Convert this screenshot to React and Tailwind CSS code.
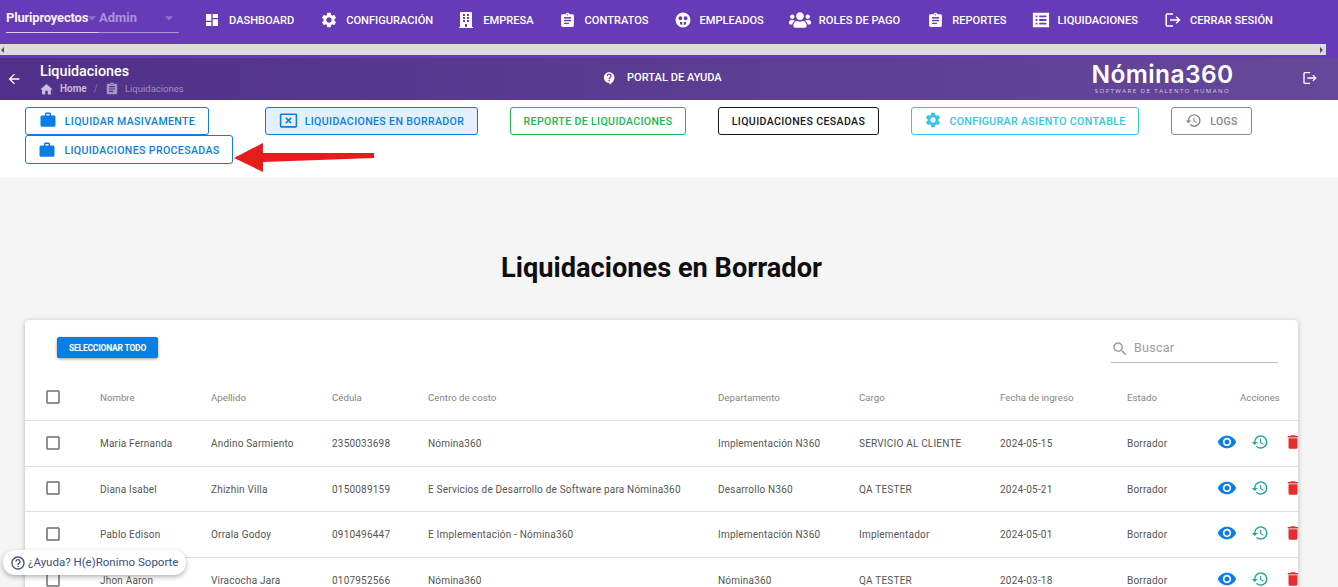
import React from "react";
import {
  MdDashboard, MdSettings, MdAssignment, MdLogout, MdArrowBack, MdHome,
  MdContactSupport, MdWork, MdOutlineCancelPresentation, MdRestore, MdSearch,
  MdVisibility, MdDelete, MdCheckBoxOutlineBlank, MdHelpOutline, MdArrowDropDown,
} from "react-icons/md";
import { FaBuilding, FaUsers } from "react-icons/fa";

function FaceIcon({ className }) {
  return (
    <svg className={className} width="1em" height="1em" viewBox="0 0 24 24" fill="currentColor">
      <path
        fillRule="evenodd"
        d="M12 2a10 10 0 1 0 0 20 10 10 0 0 0 0-20zM8.5 7a2.6 2.6 0 1 1 0 5.2 2.6 2.6 0 0 1 0-5.2zm7 0a2.6 2.6 0 1 1 0 5.2 2.6 2.6 0 0 1 0-5.2zM8 14.5h3v4.3A7 7 0 0 1 8 17.4zm5 0h3v2.9a7 7 0 0 1-3 1.4z"
      />
    </svg>
  );
}

function ListBoxIcon({ className }) {
  return (
    <svg className={className} width="1em" height="1em" viewBox="0 0 20 20" fill="currentColor">
      <path
        fillRule="evenodd"
        d="M1 2h18v16H1zM4 5v2h2V5zm4 0v2h8V5zM4 9v2h2V9zm4 0v2h8V9zM4 13v2h2v-2zm4 0v2h8v-2z"
      />
    </svg>
  );
}

const nav = [
  [MdDashboard, "DASHBOARD", "text-[16px]", "ml-[204px]", "mr-[9px]"],
  [MdSettings, "CONFIGURACIÓN", "text-[18px]", "ml-[26px]", "mr-[8px]"],
  [FaBuilding, "EMPRESA", "text-[16px]", "ml-[25px]", "mr-[9px]"],
  [MdAssignment, "CONTRATOS", "text-[17px]", "ml-[25px]", "mr-[9px]"],
  [FaceIcon, "EMPLEADOS", "text-[18px]", "ml-[25px]", "mr-[8px]"],
  [FaUsers, "ROLES DE PAGO", "text-[22px]", "ml-[25px]", "mr-[8px]"],
  [MdAssignment, "REPORTES", "text-[17px]", "ml-[27px]", "mr-[8px]"],
  [ListBoxIcon, "LIQUIDACIONES", "text-[18px]", "ml-[25px]", "mr-[8px]"],
  [MdLogout, "CERRAR SESIÓN", "text-[18px]", "ml-[26px]", "mr-[8px]"],
];

const rows = [
  ["Maria Fernanda", "Andino Sarmiento", "2350033698", "Nómina360", "Implementación N360", "SERVICIO AL CLIENTE", "2024-05-15", "h-[46px]"],
  ["Diana Isabel", "Zhizhin Villa", "0150089159", "E Servicios de Desarrollo de Software para Nómina360", "Desarrollo N360", "QA TESTER", "2024-05-21", "h-[45px]"],
  ["Pablo Edison", "Orrala Godoy", "0910496447", "E Implementación - Nómina360", "Implementación N360", "Implementador", "2024-05-01", "h-[46px]"],
  ["Jhon Aaron", "Viracocha Jara", "0107952566", "Nómina360", "Nómina360", "QA TESTER", "2024-03-18", "h-[46px]"],
];

const headers = ["Nombre", "Apellido", "Cédula", "Centro de costo", "Departamento", "Cargo", "Fecha de ingreso", "Estado"];
const gridCols = "grid grid-cols-[75px_111px_121px_96px_290px_141px_141px_127px_90px_1fr] items-center";

function ActionButton({ icon: Icon, label, cls, iconCls, bg = "" }) {
  return (
    <button className={`flex items-center justify-center rounded-[3px] border tracking-[0.35px] font-medium text-[10.6px] leading-none whitespace-nowrap ${cls} ${bg}`}>
      {Icon && <Icon className={iconCls} />}
      <span className="pt-[2px]">{label}</span>
    </button>
  );
}

export default function App() {
  return (
    <div className="relative h-[587px] w-[1338px] overflow-hidden bg-[#f5f5f5] font-['Roboto',sans-serif]">
      <header className="h-[58px] bg-[#673ab7] relative">
        <div className="flex h-[44px] items-start pt-[9px] text-white">
          <div className="absolute left-[6px] top-0 w-[173px] h-[33px] border-b border-[#a893d6]">
            <div className="absolute left-0 top-[10px] text-[13px] font-bold leading-[16px] tracking-[-0.2px] text-[#f4f1fa]">Pluriproyectos</div>
            <MdArrowDropDown className="absolute left-[76px] top-[8px] text-[20px] text-[#8e72c9]" />
            <div className="absolute left-[93px] top-[10px] text-[13px] font-bold leading-[16px] text-[#a994d8]">Admin</div>
            <MdArrowDropDown className="absolute left-[153px] top-[8px] text-[20px] text-[#8e72c9]" />
            <div className="absolute left-0 bottom-[-1px] h-px w-[93px] bg-[#d9d0ee]" />
          </div>
          {nav.map(([Icon, label, size, ml, mr]) => (
            <div key={label} className={`flex h-[22px] items-center ${ml}`}>
              <Icon className={`${size} ${mr}`} />
              <span className="pt-[2px] text-[11.1px] font-medium leading-none">{label}</span>
            </div>
          ))}
        </div>
        <div className="flex h-[11px] w-[1326px] items-center justify-between bg-[#dcdcdc] px-[1px]">
          <span className="h-0 w-0 border-y-[3px] border-r-[3px] border-y-transparent border-r-[#505050]" />
          <span className="mr-[2px] h-0 w-0 border-y-[3px] border-l-[3px] border-y-transparent border-l-[#505050]" />
        </div>
      </header>

      <div className="relative flex h-[42px] items-center bg-gradient-to-r from-[#50308a] to-[#65489a] text-white">
        <MdArrowBack className="ml-[6px] text-[16px]" />
        <div className="ml-[18px] flex flex-col pt-[1px]">
          <div className="text-[14.3px] font-medium leading-[16px]">Liquidaciones</div>
          <div className="mt-[3px] flex items-center text-[10px] leading-[12px] text-[#b5a6d2]">
            <MdHome className="ml-[-1px] mr-[3px] text-[15px] text-[#c9bfdf]" />
            <span className="ml-[3px] font-bold text-[#c6badc]">Home</span>
            <span className="mx-[7px] text-[#8d78b3]">/</span>
            <MdAssignment className="mr-[6px] text-[14px] text-[#a596c4]" />
            <span className="text-[9.5px] text-[#9e8dbf]">Liquidaciones</span>
          </div>
        </div>
        <div className="absolute left-[602px] top-[12px] flex items-center">
          <MdContactSupport className="mr-[10px] text-[15px]" />
          <span className="text-[11.1px] font-medium">PORTAL DE AYUDA</span>
        </div>
        <div className="absolute left-[1091px] top-[3px] flex w-[143px] flex-col items-center">
          <span className="font-['Inter',sans-serif] text-[24.5px] font-semibold leading-[26px] tracking-[0.4px] whitespace-nowrap">Nómina360</span>
          <span className="font-['Open_Sans',sans-serif] text-[6px] leading-[8px] tracking-[1.5px] text-[#d5cde5] whitespace-nowrap">SOFTWARE DE TALENTO HUMANO</span>
        </div>
        <MdLogout className="absolute left-[1302px] top-[12px] text-[16px]" />
      </div>

      <section className="relative h-[77px] bg-white pl-[25px] pt-[7px]">
        <div className="flex flex-wrap">
          <ActionButton icon={MdWork} label="LIQUIDAR MASIVAMENTE" iconCls="mr-[8px] mt-[-2px] text-[18px]" cls="mr-[56px] h-[28px] w-[184px] border-[#0a7ee5] text-[#0a7ee5]" />
          <ActionButton icon={MdOutlineCancelPresentation} label="LIQUIDACIONES EN BORRADOR" iconCls="mr-[7px] mt-[-2px] text-[19px]" cls="mr-[32px] h-[28px] w-[213px] border-[#0a7ee5] text-[#0a7ee5]" bg="bg-[#e3f0fc]" />
          <ActionButton label="REPORTE DE LIQUIDACIONES" cls="mr-[32px] h-[28px] w-[176px] border-[#22b84c] text-[#22b84c]" />
          <ActionButton label="LIQUIDACIONES CESADAS" cls="mr-[32px] h-[28px] w-[161px] border-[#16161e] text-[#16161e]" />
          <ActionButton icon={MdSettings} label="CONFIGURAR ASIENTO CONTABLE" iconCls="mr-[7px] mt-[-2px] text-[18px]" cls="mr-[32px] h-[28px] w-[228px] border-[#2cc8ee] text-[#33c5ec]" />
          <ActionButton icon={MdRestore} label="LOGS" iconCls="mr-[8px] mt-[-2px] text-[17px]" cls="h-[28px] w-[81px] border-[#8a8490] text-[#8a8490]" />
          <ActionButton icon={MdWork} label="LIQUIDACIONES PROCESADAS" iconCls="mr-[8px] mt-[-1px] text-[18px]" cls="h-[29px] w-[208px] border-[#0a7ee5] pt-[2px] text-[#0a7ee5]" />
        </div>
        <svg className="absolute left-[232px] top-[42px]" width="146" height="32" viewBox="0 0 146 32">
          <polygon points="2,16 31,1 31,11 142,11 142,16 31,20 31,30" fill="#e71c1c" />
        </svg>
      </section>

      <h1 className="mt-[73px] pr-[15px] text-center text-[27.2px] font-bold leading-[36px] text-[#0f0f0f]">Liquidaciones en Borrador</h1>

      <main className="ml-[25px] mt-[34px] h-[400px] w-[1273px] overflow-hidden rounded-[4px] bg-white shadow-[0_1px_5px_rgba(0,0,0,0.25)]">
        <div className="flex h-[60px] items-start justify-between">
          <button className="ml-[32px] mt-[17px] h-[21px] w-[101px] rounded-[2px] bg-[#0a7ee5] pt-px text-[8.5px] font-bold leading-none tracking-[-0.2px] text-white shadow-[0_1px_3px_rgba(0,0,0,0.4)]">SELECCIONAR TODO</button>
          <div className="mr-[20px] mt-[15px] flex h-[28px] w-[167px] items-center border-b border-[#bdbdbd] text-[#9e9e9e]">
            <MdSearch className="text-[18px]" />
            <span className="ml-[5px] text-[12.6px] tracking-[0.2px]">Buscar</span>
          </div>
        </div>
        <div className={`${gridCols} h-[41px] border-b border-[#e0e0e0] pb-[4px] text-[9.7px] text-[#858585]`}>
          <MdCheckBoxOutlineBlank className="ml-[19px] mt-[-3px] text-[18px] text-[#6e6e6e]" />
          {headers.map((h) => <span key={h}>{h}</span>)}
          <span className="pl-[23px]">Acciones</span>
        </div>
        {rows.map((r) => (
          <div key={r[0]} className={`${gridCols} ${r[7]} border-b border-[#e0e0e0] text-[10px] tracking-[0.2px] text-[#555555]`}>
            <MdCheckBoxOutlineBlank className="ml-[19px] mt-[-2px] text-[18px] text-[#6e6e6e]" />
            <span>{r[0]}</span>
            <span>{r[1]}</span>
            <span>{r[2]}</span>
            <span>{r[3]}</span>
            <span>{r[4]}</span>
            <span>{r[5]}</span>
            <span>{r[6]}</span>
            <span>Borrador</span>
            <div className="mt-[-3px] flex items-center overflow-hidden">
              <MdVisibility className="shrink-0 text-[20px] text-[#0a7ee5]" />
              <MdRestore className="ml-[14px] shrink-0 text-[18px] text-[#26a69a]" />
              <MdDelete className="ml-[15px] shrink-0 text-[18px] text-[#e52d2d]" />
            </div>
          </div>
        ))}
      </main>

      <div className="absolute left-[3px] top-[550px] flex h-[25px] w-[183px] items-center whitespace-nowrap rounded-[12px] bg-white pl-[7px] text-[11.5px] text-[#3d4f7c] shadow-[0_2px_5px_rgba(0,0,0,0.3)]">
        <MdHelpOutline className="mr-[2px] text-[16px]" />
        <span>¿Ayuda? H(e)Ronimo Soporte</span>
      </div>
    </div>
  );
}
